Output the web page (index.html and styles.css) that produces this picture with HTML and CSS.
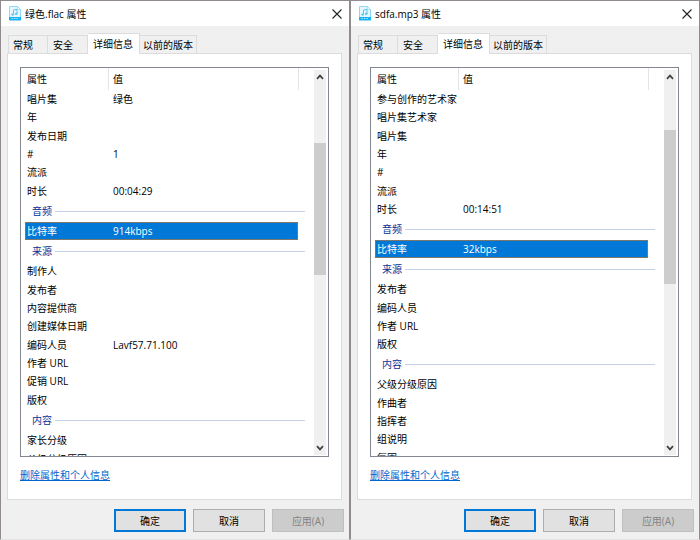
FILE: index.html
```
<!DOCTYPE html>
<html lang="zh-CN">
<head>
<meta charset="utf-8">
<title>属性</title>
<link rel="stylesheet" href="styles.css">
</head>
<body>
<svg class="sprite" aria-hidden="true">
  <symbol id="audio-file" viewBox="0 0 12 15">
    <path d="M.5 .5H8.5L11.500 3.500V14.500H.5Z" fill="#e4f6fe" stroke="#8fd8f8"/>
    <path d="M8.500 .5V3.500H11.500Z" fill="#fff" stroke="#8fd8f8" stroke-width=".7"/>
    <path d="M4.500 8.500V4L8 3.300V7.800" fill="none" stroke="#5cc4f0" stroke-width="1"/>
    <ellipse cx="3.600" cy="8.600" rx="1.400" ry="1.100" fill="#5cc4f0"/>
    <ellipse cx="7.200" cy="7.900" rx="1.300" ry="1.100" fill="#5cc4f0"/>
    <path d="M0 11H12V14H0Z" fill="#12b4f5"/>
    <path d="M2.500 12.500H9.500" stroke="#a5e2fb" stroke-width="1" stroke-dasharray="1.500 1"/>
  </symbol>
  <symbol id="close" viewBox="0 0 10 10"><path d="M.5 .5L9.500 9.500M9.500 .5L.5 9.500" fill="none" stroke="#222" stroke-width="1.100"/></symbol>
  <symbol id="up" viewBox="0 0 8 6"><path d="M1 4.800L4 1.600L7 4.800" fill="none" stroke="#404040" stroke-width="1.700"/></symbol>
  <symbol id="down" viewBox="0 0 8 6"><path d="M1 1.200L4 4.400L7 1.200" fill="none" stroke="#404040" stroke-width="1.700"/></symbol>
</svg>
<main class="desktop">
  <section class="dialog" aria-label="绿色.flac 属性">
    <header class="titlebar">
      <svg class="file-icon"><use href="#audio-file"/></svg>
      <h1>绿色.flac 属性</h1>
      <button class="close" aria-label="关闭"><svg><use href="#close"/></svg></button>
    </header>
    <div class="tabs" role="tablist">
      <button class="tab" role="tab">常规</button>
      <button class="tab" role="tab">安全</button>
      <button class="tab active" role="tab" aria-selected="true">详细信息</button>
      <button class="tab wide" role="tab">以前的版本</button>
    </div>
    <div class="panel" role="tabpanel">
      <div class="list">
        <div class="rows">
          <table>
            <colgroup><col class="name"><col><col class="end"></colgroup>
            <thead><tr><th>属性</th><th>值</th><th></th></tr></thead>
            <tbody>
              <tr><td>唱片集</td><td>绿色</td><td></td></tr>
              <tr><td>年</td><td></td><td></td></tr>
              <tr><td>发布日期</td><td></td><td></td></tr>
              <tr><td>#</td><td>1</td><td></td></tr>
              <tr><td>流派</td><td></td><td></td></tr>
              <tr><td>时长</td><td>00:04:29</td><td></td></tr>
            </tbody>
            <tbody>
              <tr class="group"><th colspan="3"><span>音频</span></th></tr>
              <tr class="selected"><td>比特率</td><td>914kbps</td><td></td></tr>
            </tbody>
            <tbody>
              <tr class="group"><th colspan="3"><span>来源</span></th></tr>
              <tr><td>制作人</td><td></td><td></td></tr>
              <tr><td>发布者</td><td></td><td></td></tr>
              <tr><td>内容提供商</td><td></td><td></td></tr>
              <tr><td>创建媒体日期</td><td></td><td></td></tr>
              <tr><td>编码人员</td><td>Lavf57.71.100</td><td></td></tr>
              <tr><td>作者 URL</td><td></td><td></td></tr>
              <tr><td>促销 URL</td><td></td><td></td></tr>
              <tr><td>版权</td><td></td><td></td></tr>
            </tbody>
            <tbody>
              <tr class="group"><th colspan="3"><span>内容</span></th></tr>
              <tr><td>家长分级</td><td></td><td></td></tr>
              <tr><td>父级分级原因</td><td></td><td></td></tr>
            </tbody>
          </table>
        </div>
        <div class="scrollbar">
          <button aria-label="向上滚动"><svg><use href="#up"/></svg></button>
          <div class="track"><div class="thumb middle"></div></div>
          <button aria-label="向下滚动"><svg><use href="#down"/></svg></button>
        </div>
      </div>
      <a href="#remove">删除属性和个人信息</a>
    </div>
    <footer class="actions">
      <button class="default">确定</button>
      <button>取消</button>
      <button disabled>应用(A)</button>
    </footer>
  </section>
  <section class="dialog" aria-label="sdfa.mp3 属性">
    <header class="titlebar">
      <svg class="file-icon"><use href="#audio-file"/></svg>
      <h1>sdfa.mp3 属性</h1>
      <button class="close" aria-label="关闭"><svg><use href="#close"/></svg></button>
    </header>
    <div class="tabs" role="tablist">
      <button class="tab" role="tab">常规</button>
      <button class="tab" role="tab">安全</button>
      <button class="tab active" role="tab" aria-selected="true">详细信息</button>
      <button class="tab wide" role="tab">以前的版本</button>
    </div>
    <div class="panel" role="tabpanel">
      <div class="list">
        <div class="rows">
          <table>
            <colgroup><col class="name"><col><col class="end"></colgroup>
            <thead><tr><th>属性</th><th>值</th><th></th></tr></thead>
            <tbody>
              <tr><td>参与创作的艺术家</td><td></td><td></td></tr>
              <tr><td>唱片集艺术家</td><td></td><td></td></tr>
              <tr><td>唱片集</td><td></td><td></td></tr>
              <tr><td>年</td><td></td><td></td></tr>
              <tr><td>#</td><td></td><td></td></tr>
              <tr><td>流派</td><td></td><td></td></tr>
              <tr><td>时长</td><td>00:14:51</td><td></td></tr>
            </tbody>
            <tbody>
              <tr class="group"><th colspan="3"><span>音频</span></th></tr>
              <tr class="selected"><td>比特率</td><td>32kbps</td><td></td></tr>
            </tbody>
            <tbody>
              <tr class="group"><th colspan="3"><span>来源</span></th></tr>
              <tr><td>发布者</td><td></td><td></td></tr>
              <tr><td>编码人员</td><td></td><td></td></tr>
              <tr><td>作者 URL</td><td></td><td></td></tr>
              <tr><td>版权</td><td></td><td></td></tr>
            </tbody>
            <tbody>
              <tr class="group"><th colspan="3"><span>内容</span></th></tr>
              <tr><td>父级分级原因</td><td></td><td></td></tr>
              <tr><td>作曲者</td><td></td><td></td></tr>
              <tr><td>指挥者</td><td></td><td></td></tr>
              <tr><td>组说明</td><td></td><td></td></tr>
              <tr><td>氛围</td><td></td><td></td></tr>
            </tbody>
          </table>
        </div>
        <div class="scrollbar">
          <button aria-label="向上滚动"><svg><use href="#up"/></svg></button>
          <div class="track"><div class="thumb upper"></div></div>
          <button aria-label="向下滚动"><svg><use href="#down"/></svg></button>
        </div>
      </div>
      <a href="#remove">删除属性和个人信息</a>
    </div>
    <footer class="actions">
      <button class="default">确定</button>
      <button>取消</button>
      <button disabled>应用(A)</button>
    </footer>
  </section>
</main>
</body>
</html>
```
FILE: styles.css
```
* { box-sizing: border-box; }
body {
  margin: 0;
  font: 10px/18px "Open Sans", "Noto Sans CJK SC", sans-serif;
  color: #000;
}
button { font: inherit; color: inherit; padding: 0; margin: 0; border: 0; background: none; }
svg { display: block; }
.sprite { position: absolute; width: 0; height: 0; }

.desktop { display: grid; grid-template-columns: 1fr 1fr; height: 100vh; min-height: 360px; }
.dialog {
  display: flex;
  flex-direction: column;
  min-width: 0;
  min-height: 0;
  background: #f0f0f0;
  border: 1px solid #918a8e;
  border-bottom-color: #e4e4e4;
}

.titlebar { display: flex; align-items: center; height: 25px; padding: 0 7px 0 8px; background: #fff; }
.file-icon { width: 12px; height: 15px; margin-right: 4px; }
.titlebar h1 { flex: 1; margin: 0; font-size: 10px; font-weight: 400; }
.close svg { width: 10px; height: 10px; }

.tabs { display: flex; align-items: flex-end; height: 27px; padding-left: 7px; }
.tab {
  width: 40px;
  height: 18px;
  padding-left: 4px;
  text-align: left;
  border: 1px solid #dcdcdc;
  border-bottom: 0;
}
.tab + .tab { border-left: 0; padding-left: 5px; }
.tab.active {
  z-index: 1;
  width: 52px;
  height: 21px;
  margin-bottom: -1px;
  background: #fff;
}
.tab.active + .tab { width: 57px; padding-left: 3px; }

.panel {
  display: flex;
  flex-direction: column;
  flex: 1;
  min-height: 0;
  margin: 0 7px 0 6px;
  padding: 13px 12px 15px;
  background: #fff;
  border: 1px solid #dcdcdc;
}
.panel a { align-self: flex-start; margin-top: 9px; color: #0066cc; }

.list { display: flex; flex: 1; min-height: 0; border: 1px solid #828790; padding-right: 2px; }
.rows { flex: 1; min-width: 0; padding: 0 9px 0 4px; overflow: hidden; }
table { width: 100%; table-layout: fixed; border-collapse: separate; border-spacing: 0; }
.name { width: 83px; }
.end { width: 7px; }
th, td { padding: 0 0 0 2px; font-weight: 400; text-align: left; white-space: nowrap; }
th + th, td + td { padding-left: 5px; }
thead th { height: 22px; }
thead th + th { border-left: 1px solid #e5e5e5; padding-left: 4px; }
tbody tr { height: 18px; }
tbody tr:nth-child(3n) { height: 19px; }
tbody .group { height: 22px; color: #003399; }
.group th { padding-left: 7px; }
.group span { display: flex; align-items: center; gap: 3px; }
.group span::after { content: ""; flex: 1; height: 1px; background: #c3d1ea; }
.selected { color: #fff; }
.selected td:not(:last-child) { background: #0078d7; border: solid #7d776b; border-width: 1px 0; line-height: 16px; }
.selected td:first-child { border-left-width: 1px; padding-left: 1px; }
.selected td:nth-child(2) { border-right-width: 1px; }

.scrollbar { display: flex; flex-direction: column; width: 12px; margin: 2px 0 1px; background: #f0f0f0; }
.scrollbar button { display: grid; place-items: center; height: 14px; }
.scrollbar button svg { width: 8px; height: 6px; }
.track { flex: 1; }
.thumb { background: #cdcdcd; }
.middle { height: 37%; margin-top: 59px; }
.upper { height: 43%; margin-top: 46px; }

.actions { display: flex; justify-content: flex-end; gap: 7px; padding: 9px 5px 7px; }
.actions button { width: 72px; height: 23px; background: #e1e1e1; border: 1px solid #adadad; color: #000; }
.actions .default { border: 2px solid #0078d7; }
.actions button:disabled { background: #cccccc; border-color: #bfbfbf; color: #838383; }
```
